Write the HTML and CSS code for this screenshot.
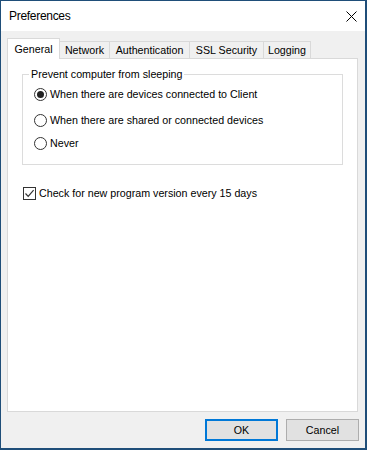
FILE: index.html
```html
<!DOCTYPE html>
<html>
<head>
<meta charset="utf-8">
<title>Preferences</title>
<link rel="stylesheet" href="styles.css">
</head>
<body>
<div class="window">
  <div class="titlebar">
    <span class="title">Preferences</span>
    <svg class="close" width="11" height="11" viewBox="0 0 11 11"><path d="M0.5 0.5 L10.5 10.5 M10.5 0.5 L0.5 10.5" stroke="#000" stroke-width="1" fill="none"/></svg>
  </div>
  <div class="body">
    <div class="tabs">
      <div class="tab active t-general">General</div>
      <div class="tab t-network">Network</div>
      <div class="tab t-auth">Authentication</div>
      <div class="tab t-ssl">SSL Security</div>
      <div class="tab t-log">Logging</div>
    </div>
    <div class="panel">
      <div class="group">
        <span class="legend">Prevent computer from sleeping</span>
        <label class="opt o1"><span class="radio checked"></span>When there are devices connected to Client</label>
        <label class="opt o2"><span class="radio"></span>When there are shared or connected devices</label>
        <label class="opt o3"><span class="radio"></span>Never</label>
      </div>
      <label class="check"><span class="box"><svg width="11" height="11" viewBox="0 0 11 11"><path d="M1.5 5.5 L4.2 8.3 L9.6 2.2" stroke="#333" stroke-width="1.2" fill="none"/></svg></span>Check for new program version every 15 days</label>
    </div>
    <div class="footer">
      <button class="btn ok">OK</button>
      <button class="btn">Cancel</button>
    </div>
  </div>
</div>
</body>
</html>
```
FILE: styles.css
```css
* { box-sizing: border-box; }
body {
  margin: 0;
  width: 367px;
  height: 450px;
  font-family: "Liberation Sans", Arial, sans-serif;
  font-size: 10.7px;
  color: #000;
}
.window {
  width: 367px;
  height: 450px;
  border: 1px solid #1f4e79;
  border-right-width: 2px;
  border-bottom-width: 2px;
  background: #f0f0f0;
  display: flex;
  flex-direction: column;
}
.titlebar {
  height: 30px;
  flex-shrink: 0;
  background: #fff;
  display: flex;
  align-items: center;
  justify-content: space-between;
  padding: 0 8px 0 8px;
}
.title {
  font-size: 12px;
  letter-spacing: -0.3px;
}
.close { display: block; }
.body {
  flex: 1;
  padding: 7px 7px 0 6px;
  display: flex;
  flex-direction: column;
}
.tabs {
  display: flex;
  align-items: flex-end;
  height: 21px;
  margin-bottom: -1px;
  position: relative;
  z-index: 1;
}
.tab {
  height: 17px;
  margin-bottom: 1px;
  border: 1px solid #d9d9d9;
  border-bottom: none;
  margin-left: -1px;
  text-align: center;
  line-height: 16px;
  background: #f0f0f0;
  white-space: nowrap;
}
.tab:first-child { margin-left: 0; }
.tab.active {
  height: 21px;
  margin-bottom: 0;
  padding-top: 2px;
  background: #fff;
  position: relative;
  z-index: 2;
}
.t-general { width: 53px; }
.t-network { width: 51px; }
.t-auth { width: 81px; }
.t-ssl { width: 75px; }
.t-log { width: 48px; }
.panel {
  height: 354px;
  background: #fff;
  border: 1px solid #d9d9d9;
  padding: 15px 0 0 14px;
}
.group {
  width: 321px;
  height: 91px;
  border: 1px solid #dcdcdc;
  display: flex;
  flex-direction: column;
  padding-left: 11px;
}
.legend {
  align-self: flex-start;
  margin-top: -7px;
  margin-left: -5px;
  padding: 0 2px;
  height: 13px;
  line-height: 13px;
  background: #fff;
}
.opt {
  display: flex;
  align-items: center;
  gap: 3px;
  height: 13px;
  line-height: 13px;
  white-space: nowrap;
}
.o1 { margin-top: 7px; }
.o2 { margin-top: 13px; }
.o3 { margin-top: 10px; }
.radio {
  width: 13px;
  height: 13px;
  flex-shrink: 0;
  border: 1px solid #333;
  border-radius: 50%;
  background: #fff;
  display: flex;
  align-items: center;
  justify-content: center;
}
.radio.checked::after {
  content: "";
  width: 7px;
  height: 7px;
  border-radius: 50%;
  background: #222;
}
.check {
  display: flex;
  align-items: center;
  gap: 3px;
  height: 13px;
  line-height: 13px;
  margin-top: 22px;
  margin-left: 1px;
  white-space: nowrap;
}
.box {
  width: 13px;
  height: 13px;
  flex-shrink: 0;
  border: 1px solid #333;
  background: #fff;
  display: flex;
}
.box svg { display: block; }
.footer {
  display: flex;
  justify-content: flex-end;
  gap: 8px;
  padding-top: 7px;
  margin-right: -1px;
}
.btn {
  width: 73px;
  height: 22px;
  padding: 0;
  margin: 0;
  background: #e1e1e1;
  border: 1px solid #adadad;
  font-family: "Liberation Sans", Arial, sans-serif;
  font-size: 10.7px;
  color: #000;
}
.btn.ok {
  border: 2px solid #0078d7;
}
```
